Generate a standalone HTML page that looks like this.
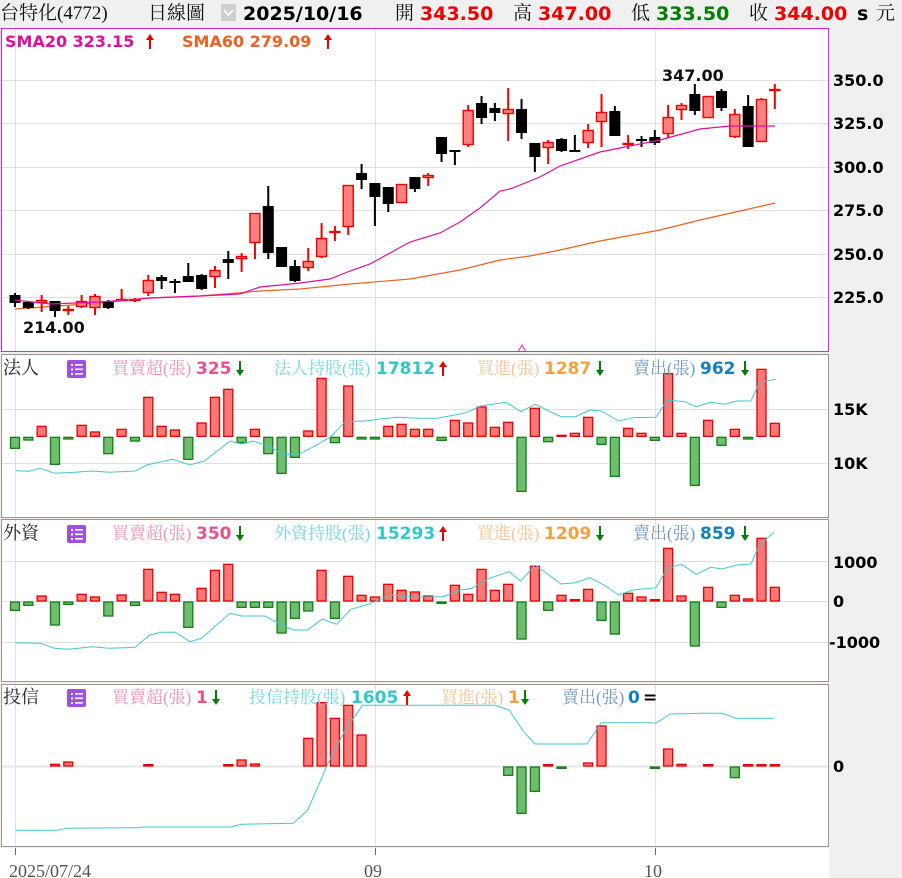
<!DOCTYPE html>
<html><head><meta charset="utf-8">
<style>
html,body{margin:0;padding:0;background:#f0f0f0;width:902px;height:878px;overflow:hidden}
svg{display:block}
.b{font-family:"DejaVu Sans","Liberation Sans",sans-serif;font-weight:bold}
.c{font-family:"Liberation Serif","Noto Serif CJK SC",serif}
</style></head><body>
<svg id="s" width="902" height="878" xmlns="http://www.w3.org/2000/svg">
<rect x="0" y="0" width="902" height="878" fill="#f0f0f0"/>
<text x="0" y="19" class="c" font-size="19" fill="#111">台特化(4772)</text>
<text x="148" y="19" class="c" font-size="19" fill="#111">日線圖</text>
<rect x="221" y="4" width="15" height="17" fill="#cfcfcf"/>
<path d="M224 10 L228.5 15 L233 10" stroke="#fff" stroke-width="1.6" fill="none"/>
<text x="243" y="20" class="b" font-size="19" fill="#000">2025/10/16</text>
<text x="395" y="19" class="c" font-size="19" fill="#111">開</text>
<text x="420" y="20" class="b" font-size="19" fill="#f00000">343.50</text>
<text x="513" y="19" class="c" font-size="19" fill="#111">高</text>
<text x="538" y="20" class="b" font-size="19" fill="#f00000">347.00</text>
<text x="631" y="19" class="c" font-size="19" fill="#111">低</text>
<text x="656" y="20" class="b" font-size="19" fill="#008000">333.50</text>
<text x="749" y="19" class="c" font-size="19" fill="#111">收</text>
<text x="774" y="20" class="b" font-size="19" fill="#f00000">344.00</text>
<text x="857" y="20" class="b" font-size="19" fill="#000">s</text>
<text x="876" y="19" class="c" font-size="19" fill="#111">元</text>

<rect x="1.5" y="28.5" width="827" height="323" fill="#fff" stroke="#e020e0" stroke-width="1"/>
<g id="mgrid" stroke="#e0e0e0" stroke-width="1"></g>
<text x="5" y="47" class="b" font-size="16" fill="#e0109a">SMA20 323.15</text>
<text x="182" y="47" class="b" font-size="16" fill="#f06020">SMA60 279.09</text>
<g id="arrows"></g>
<g id="candles"></g>
<text x="662" y="81" class="b" font-size="16" fill="#111">347.00</text>
<text x="23" y="333" class="b" font-size="16" fill="#111">214.00</text>
<path d="M518 352 L522 345 L526 352" stroke="#e020e0" fill="none" stroke-width="1"/>

<rect x="1.5" y="354.5" width="827" height="163" fill="#fff" stroke="#a09488"/>
<rect x="1.5" y="519.5" width="827" height="162" fill="#fff" stroke="#a09488"/>
<rect x="1.5" y="684.5" width="827" height="162" fill="#fff" stroke="#a09488"/>
<rect x="0" y="848" width="829" height="30" fill="#fff"/>
<g id="sub"></g>

<g class="b" font-size="16" fill="#000">
<text x="833" y="86">350.0</text>
<text x="833" y="129">325.0</text>
<text x="833" y="173">300.0</text>
<text x="833" y="216">275.0</text>
<text x="833" y="260">250.0</text>
<text x="833" y="303">225.0</text>
<text x="833" y="415">15K</text>
<text x="833" y="469">10K</text>
<text x="833" y="568">1000</text>
<text x="833" y="607">0</text>
<text x="829" y="648">-1000</text>
<text x="833" y="772">0</text>
</g>
<line x1="15.5" y1="848" x2="15.5" y2="855" stroke="#666"/>
<line x1="375.5" y1="848" x2="375.5" y2="855" stroke="#666"/>
<line x1="655.5" y1="848" x2="655.5" y2="855" stroke="#666"/>
<text x="9" y="877" class="c" font-size="18" fill="#555">2025/07/24</text>
<text x="364" y="877" class="c" font-size="18" fill="#555">09</text>
<text x="644" y="877" class="c" font-size="18" fill="#555">10</text>
<g id="labels"></g>
</svg>
<script>
var NS="http://www.w3.org/2000/svg";
function el(parent,tag,attrs,txt){var e=document.createElementNS(NS,tag);for(var k in attrs)e.setAttribute(k,attrs[k]);if(txt!=null)e.textContent=txt;(typeof parent=='string'?document.getElementById(parent):parent).appendChild(e);return e;}
[80,123,167,210,254,297].forEach(function(y){el('mgrid','line',{x1:2,x2:828,y1:y+.5,y2:y+.5});});
[15,375,655].forEach(function(x){el('mgrid','line',{x1:x+.5,x2:x+.5,y1:29,y2:351});});
function arrow(g,x,y,up){var c=up?'#f00000':'#008000';
 if(up){el(g,'path',{d:'M'+x+' '+(y-13)+' L'+(x-4)+' '+(y-7)+' L'+(x+4)+' '+(y-7)+'Z',fill:c});el(g,'rect',{x:x-1,y:y-8,width:2,height:10,fill:c});}
 else{el(g,'path',{d:'M'+x+' '+(y+2)+' L'+(x-4)+' '+(y-4)+' L'+(x+4)+' '+(y-4)+'Z',fill:c});el(g,'rect',{x:x-1,y:y-13,width:2,height:10,fill:c});}}
arrow('arrows',150,47,true);arrow('arrows',328,47,true);
var C=[[295,303,293,307,'b'],[302,308,302,309,'b'],[300,303,295,312,'r'],[301,311,301,317,'b'],[309,311,306,315,'r'],[301,307,295,308,'r'],[296,308,294,315,'r'],[302,308,300,309,'b'],[299,301,289,301,'r'],[299,301,298,302,'r'],[280,293,275,296,'r'],[277,281,275,289,'b'],[281,283,279,293,'b'],[276,282,263,282,'b'],[275,289,274,290,'b'],[270,277,266,288,'r'],[259,263,251,279,'b'],[256,259,253,272,'r'],[213,243,213,259,'r'],[206,253,186,259,'b'],[247,267,247,267,'b'],[266,281,260,282,'b'],[261,268,248,271,'r'],[238,257,223,258,'r'],[231,233,226,241,'r'],[185,227,185,235,'r'],[173,180,164,189,'b'],[183,197,183,226,'b'],[187,204,187,212,'b'],[184,203,184,203,'r'],[177,189,177,192,'b'],[175,178,173,186,'r'],[137,154,137,162,'b'],[150,152,150,165,'b'],[110,145,105,147,'r'],[103,118,96,124,'b'],[108,113,103,121,'b'],[109,114,88,141,'r'],[109,133,99,139,'b'],[143,157,143,172,'b'],[142,148,140,164,'r'],[139,151,138,152,'b'],[150,151,135,152,'b'],[130,143,124,148,'r'],[112,122,94,147,'r'],[111,136,106,136,'b'],[143,145,135,149,'r'],[139,141,136,147,'b'],[137,143,130,145,'b'],[117,134,105,138,'r'],[105,110,103,120,'r'],[94,111,84,115,'b'],[96,118,96,118,'r'],[91,108,89,111,'b'],[114,137,109,138,'r'],[106,147,95,147,'b'],[99,142,98,142,'r'],[89,91,84,109,'r']];
function X(i){return 15+i*13.33;}
function pl(g,pts,col,w,sx,oy){var d=pts.map(function(p,i){return (i?'L':'M')+(p[0]/sx).toFixed(1)+' '+(oy+p[1]/3).toFixed(1);}).join(' ');el(g,'path',{d:d,stroke:col,'stroke-width':w||1,fill:'none'});}
var sma60=[[15,309],[100,303],[150,298],[200,296],[260,291],[300,289],[350,284],[410,279],[460,270],[500,260],[530,256],[560,250],[600,241],[660,230],[700,220],[740,211],[775,203]];
var sma20=[[15,300],[50,304],[100,302],[150,298],[200,296],[240,294],[260,287],[300,283],[330,279],[350,271],[370,264],[410,242],[440,233],[460,222],[470,215],[480,208],[500,191],[510,189],[540,177],[560,166],[600,152],[630,146],[660,140],[700,129],[730,126],[775,126]];
function pl2(pts,col){el('candles','path',{d:pts.map(function(p,i){return (i?'L':'M')+p[0]+' '+p[1];}).join(' '),stroke:col,'stroke-width':1.2,fill:'none'});}
pl2(sma60,'#f06020');
C.forEach(function(c,i){var x=X(i),r=c[4]=='r',col=r?'#f00000':'#000';
 el('candles','rect',{x:x-1,y:c[2],width:2,height:Math.max(1,c[3]-c[2]),fill:col});
 var h=Math.max(2,c[1]-c[0]);
 if(r)el('candles','rect',{x:x-5,y:c[0]+.5,width:10,height:h-1,fill:'#ff8080',stroke:'#f00000','stroke-width':1.4});
 else el('candles','rect',{x:x-5.5,y:c[0],width:11,height:h,fill:'#000'});
});
pl2(sma20,'#e0109a');
var G=document.getElementById('sub');
function grid(ys,y1,y2){ys.forEach(function(y){el(G,'line',{x1:2,x2:828,y1:y+.5,y2:y+.5,stroke:'#e0e0e0'});});[15,375,655].forEach(function(x){el(G,'line',{x1:x+.5,x2:x+.5,y1:y1,y2:y2,stroke:'#e0e0e0'});});}
grid([409,463],355,517);grid([561,601,642],520,681);grid([],685,846);
el(G,'line',{x1:2,x2:828,y1:766.5,y2:766.5,stroke:'#e6e6e6','stroke-width':2});
function bars(arr,oy,zero){arr.forEach(function(v,i){if(v==null)return;var x=X(i),y=oy+v/3,z=oy+zero/3;
 if(v<zero){el(G,'rect',{x:x-4.5,y:y,width:9,height:Math.max(1,z-y),fill:'#f87878',stroke:'#e80000','stroke-width':1.3});}
 else{el(G,'rect',{x:x-4.5,y:z+1,width:9,height:Math.max(1,y-z),fill:'#70bc70',stroke:'#108010','stroke-width':1.3});}});}
bars([322,297,259,370,294,256,276,338,268,300,172,259,270,355,249,172,148,305,268,338,397,349,273,115,305,138,294,294,259,253,268,268,298,241,249,201,262,247,451,205,302,286,280,232,310,406,265,280,298,101,280,433,241,313,268,294,88,250],340,289);
bars([283,268,243,327,265,238,246,300,240,268,163,232,238,334,220,166,148,274,274,274,351,307,285,166,307,184,241,246,208,226,231,243,262,211,238,163,226,208,369,154,283,241,254,223,313,354,235,246,254,100,243,390,217,274,241,252,70,217],515,258);
var tx={3:253,4:246,10:254,16:254,17:240,18:252,22:175,23:68,24:115,25:76,26:165,37:283,38:397,39:331,40:254,41:262,43:249,44:138,48:262,49:207,50:253,52:254,54:290,55:254,56:254,57:254};
var ta=[];for(var i=0;i<58;i++)ta.push(tx[i]==null?null:tx[i]);bars(ta,680,258);
var sx=1.738;
pl(G,[[27,392],[50,394],[70,385],[95,400],[130,397],[160,393],[190,397],[235,393],[255,375],[300,358],[330,375],[355,363],[400,303],[420,312],[440,303],[470,320],[490,343],[520,343],[550,315],[575,290],[600,245],[640,242],[660,237],[690,232],[730,235],[760,235],[790,225],[810,218],[835,198],[880,187],[905,215],[930,193],[975,230],[1000,230],[1025,210],[1045,213],[1075,243],[1100,233],[1140,232],[1160,180],[1190,185],[1210,200],[1235,187],[1260,193],[1280,183],[1305,183],[1320,127],[1348,118]],'#40c8d0',1,sx,340);
pl(G,[[27,383],[70,385],[95,400],[120,403],[160,395],[190,400],[235,397],[260,360],[280,352],[305,352],[330,380],[350,370],[400,295],[420,303],[460,303],[490,330],[510,345],[535,345],[560,312],[585,328],[610,283],[640,268],[680,240],[720,247],[770,245],[800,225],[820,220],[850,190],[885,170],[905,198],[930,150],[975,207],[1000,203],[1025,188],[1050,210],[1075,240],[1100,225],[1140,218],[1160,160],[1185,148],[1210,178],[1235,157],[1255,162],[1280,150],[1305,147],[1320,90],[1345,52]],'#40c8d0',1,sx,515);
pl(G,[[27,451],[100,451],[115,445],[240,443],[250,441],[400,441],[420,433],[510,430],[535,390],[570,250],[600,150],[630,76],[860,76],[885,90],[910,155],[930,192],[1020,192],[1045,128],[1125,128],[1140,130],[1165,102],[1220,100],[1255,100],[1280,115],[1345,115]],'#40c8d0',1,sx,680);
var L='labels';
function icon(y){el(L,'rect',{x:67,y:y,width:19,height:18,rx:2,fill:'#a050e0'});
 for(var k=0;k<3;k++){el(L,'rect',{x:71,y:y+4+k*4.5,width:2,height:2,fill:'#fff'});el(L,'rect',{x:75,y:y+4+k*4.5,width:8,height:1.6,fill:'#fff'});}}
function row(y,name,a,b,bname,c,d,e,opt){
 el(L,'text',{x:3,y:y,'class':'c','font-size':18,fill:'#222'},name);icon(y-14);
 el(L,'text',{x:112,y:y,'class':'c','font-size':17,fill:'#f090b0'},'買賣超(張)');
 el(L,'text',{x:196,y:y,'class':'b','font-size':17,fill:'#f05088'},a);arrow(L,opt[0],y,false);
 el(L,'text',{x:opt[1],y:y,'class':'c','font-size':17,fill:'#70dada'},bname);
 el(L,'text',{x:opt[2],y:y,'class':'b','font-size':17,fill:'#30c8c8'},b);arrow(L,opt[3],y,true);
 el(L,'text',{x:opt[4],y:y,'class':'c','font-size':17,fill:'#f8c090'},'買進(張)');
 el(L,'text',{x:opt[5],y:y,'class':'b','font-size':17,fill:'#f8a040'},c);
 el(L,'text',{x:opt[7],y:y,'class':'c','font-size':17,fill:'#7098c0'},'賣出(張)');
 el(L,'text',{x:opt[8],y:y,'class':'b','font-size':17,fill:'#1080c0'},d);
 if(e){arrow(L,opt[6],y,false);arrow(L,opt[9],y,false);}
}
row(374,'法人','325','17812','法人持股(張)','1287','962',true,[240,274,376,443,477,544,600,633,700,745]);
row(539,'外資','350','15293','外資持股(張)','1209','859',true,[240,274,376,443,477,544,600,633,700,745]);
row(703,'投信','1','1605','投信持股(張)','1','0',false,[216,249,351,407,441,508,525,562,628,0]);
arrow(L,525,703,false);
el(L,'text',{x:643,y:703,'class':'b','font-size':17,fill:'#000'},'=');
</script>
</body></html>
